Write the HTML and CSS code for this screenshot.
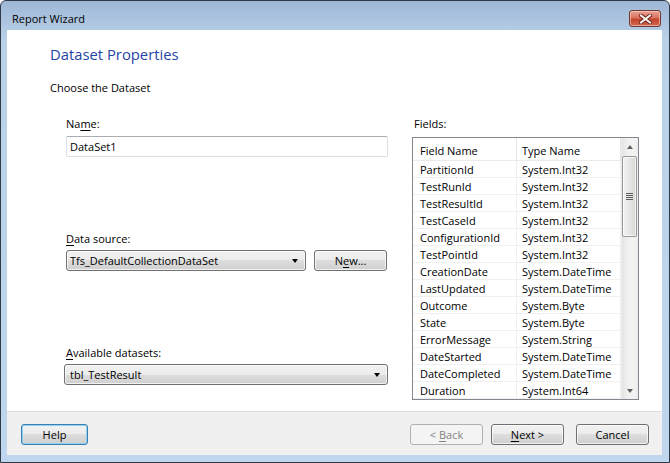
FILE: index.html
```html
<!DOCTYPE html>
<html>
<head>
<meta charset="utf-8">
<title>Report Wizard</title>
<link rel="stylesheet" href="styles.css">
</head>
<body>
<div class="window">
  <div class="titlebar">
    <span class="title">Report Wizard</span>
    <div class="close">
      <svg width="13" height="10" viewBox="0 0 13 10">
        <path d="M2 1.5 L11 8.5 M11 1.5 L2 8.5" stroke="#6a2418" stroke-width="4" stroke-linecap="square" fill="none"/>
        <path d="M2 1.5 L11 8.5 M11 1.5 L2 8.5" stroke="#f4f0ee" stroke-width="2" stroke-linecap="square" fill="none"/>
      </svg>
    </div>
  </div>
  <div class="client">
    <div class="page">
      <div class="heading">Dataset Properties</div>
      <div class="intro">Choose the Dataset</div>
      <div class="columns">
        <div class="left">
          <div class="label">Na<u>m</u>e:</div>
          <div class="textbox">DataSet1</div>
          <div class="label spaced"><u>D</u>ata source:</div>
          <div class="row">
            <div class="combo short">
              <span>Tfs_DefaultCollectionDataSet</span>
              <span class="arrow"></span>
            </div>
            <div class="btn newbtn"><span>N<u>e</u>w...</span></div>
          </div>
          <div class="label spaced"><u>A</u>vailable datasets:</div>
          <div class="combo wide">
            <span>tbl_TestResult</span>
            <span class="arrow"></span>
          </div>
        </div>
        <div class="right">
          <div class="label fields-label">Fields:</div>
          <div class="list">
            <div class="grid">
              <div class="hdr">Field Name</div><div class="hdr">Type Name</div>
              <div class="cell">PartitionId</div><div class="cell">System.Int32</div>
              <div class="cell">TestRunId</div><div class="cell">System.Int32</div>
              <div class="cell">TestResultId</div><div class="cell">System.Int32</div>
              <div class="cell">TestCaseId</div><div class="cell">System.Int32</div>
              <div class="cell">ConfigurationId</div><div class="cell">System.Int32</div>
              <div class="cell">TestPointId</div><div class="cell">System.Int32</div>
              <div class="cell">CreationDate</div><div class="cell">System.DateTime</div>
              <div class="cell">LastUpdated</div><div class="cell">System.DateTime</div>
              <div class="cell">Outcome</div><div class="cell">System.Byte</div>
              <div class="cell">State</div><div class="cell">System.Byte</div>
              <div class="cell">ErrorMessage</div><div class="cell">System.String</div>
              <div class="cell">DateStarted</div><div class="cell">System.DateTime</div>
              <div class="cell">DateCompleted</div><div class="cell">System.DateTime</div>
              <div class="cell">Duration</div><div class="cell">System.Int64</div>
            </div>
            <div class="scrollbar">
              <div class="sb-arrow up"></div>
              <div class="sb-track">
                <div class="thumb"><span class="grip"></span></div>
              </div>
              <div class="sb-arrow down"></div>
            </div>
          </div>
        </div>
      </div>
    </div>
    <div class="footer">
      <div class="btn help"><span>Help</span></div>
      <div class="spacer"></div>
      <div class="btn disabled"><span>&lt; <u>B</u>ack</span></div>
      <div class="btn next"><span><u>N</u>ext &gt;</span></div>
      <div class="btn cancel"><span>Cancel</span></div>
    </div>
  </div>
</div>
</body>
</html>
```

FILE: styles.css
```css
* { box-sizing: border-box; }
html, body { margin: 0; padding: 0; background: #ffffff; }
body {
  font-family: "Open Sans", "Liberation Sans", sans-serif;
  font-size: 11px;
  color: #000;
}
u { text-decoration: underline; text-underline-offset: 2px; }

.window {
  width: 670px;
  height: 463px;
  border: 1px solid #2f3a46;
  border-radius: 6px 6px 0 0;
  background: linear-gradient(#9db7d6 0px, #b3cae4 28px, #bad1ea 40px, #bfd6ee 100%);
  display: flex;
  flex-direction: column;
}

.titlebar {
  height: 29px;
  display: flex;
  align-items: flex-start;
  padding-left: 11px;
  padding-right: 8px;
}
.title {
  margin-top: 10px;
  font-size: 11px;
  line-height: 16px;
  color: #000;
  flex: 1;
}
.close {
  margin-top: 9px;
  width: 32px;
  height: 17px;
  border: 1px solid #6e3a32;
  border-radius: 3px;
  background: linear-gradient(#e8a294 0%, #d9725f 45%, #c4432c 55%, #d06a50 100%);
  box-shadow: inset 0 0 0 1px rgba(255,220,210,0.55);
  display: flex;
  align-items: center;
  justify-content: center;
}
.close svg { display: block; }

.client {
  margin: 0 7px 7px 6px;
  height: 425px;
  display: flex;
  flex-direction: column;
  background: #fff;
}

.page {
  height: 381px;
  padding: 14px 0 0 43px;
}
.heading {
  font-size: 14.8px;
  line-height: 20px;
  color: #1f45a6;
}
.intro {
  margin-top: 16px;
  line-height: 16px;
}

.columns {
  display: flex;
  margin-top: 20px;
  margin-left: 16px;
  gap: 24px;
}
.left {
  width: 322px;
  display: flex;
  flex-direction: column;
}
.right {
  width: 227px;
  display: flex;
  flex-direction: column;
}
.label {
  line-height: 16px;
  height: 16px;
}
.fields-label { padding-left: 2px; }
.spaced { margin-top: 74px; }

.textbox {
  margin-top: 4px;
  height: 21px;
  border: 1px solid #dbdfe6;
  border-top-color: #abadb3;
  border-radius: 2px;
  padding: 0 0 0 3px;
  line-height: 19px;
}

.row {
  display: flex;
  margin-top: 3px;
  gap: 8px;
}

.combo {
  height: 21px;
  border: 1px solid #707070;
  border-radius: 3px;
  background: linear-gradient(#f2f2f2 0%, #ebebeb 50%, #dddddd 50%, #cfcfcf 100%);
  box-shadow: inset 0 0 0 1px rgba(255,255,255,0.7);
  display: flex;
  align-items: center;
  padding: 0 7px 0 3px;
  line-height: 19px;
}
.combo span:first-child { flex: 1; }
.combo.short { width: 240px; }
.combo.wide { width: 324px; margin-left: -2px; margin-top: 3px; padding-left: 5px; }
.arrow {
  width: 0; height: 0;
  border-left: 3.5px solid transparent;
  border-right: 3.5px solid transparent;
  border-top: 4px solid #000;
}

.btn {
  height: 21px;
  border: 1px solid #707070;
  border-radius: 3px;
  background: linear-gradient(#f2f2f2 0%, #ebebeb 50%, #dddddd 50%, #cfcfcf 100%);
  box-shadow: inset 0 0 0 1px rgba(255,255,255,0.7);
  display: flex;
  align-items: center;
  justify-content: center;
  line-height: 19px;
}
.newbtn { width: 73px; }

.list {
  margin-top: 5px;
  height: 263px;
  width: 227px;
  border: 1px solid #828790;
  display: flex;
  overflow: hidden;
}
.grid {
  width: 208px;
  display: grid;
  grid-template-columns: 104px 104px;
  grid-template-rows: 23px repeat(14, 17px);
}
.hdr {
  padding: 3px 0 0 7px;
  line-height: 19px;
  border-right: 1px solid #e5e5e5;
  border-bottom: 1px solid #ebebeb;
}
.hdr:nth-child(2) { padding-left: 5px; }
.cell {
  padding: 1px 0 0 7px;
  line-height: 16px;
  border-right: 1px solid #f0f0f0;
  border-bottom: 1px solid #f0f0f0;
  white-space: nowrap;
  overflow: hidden;
}
.cell:nth-child(even) { padding-left: 5px; }

.scrollbar {
  width: 17px;
  display: flex;
  flex-direction: column;
  background: linear-gradient(90deg, #e3e3e3, #efefef 30%, #f3f3f3 70%, #ececec);
  border-left: 1px solid #ececec;
}
.sb-arrow {
  height: 17px;
  display: flex;
  align-items: center;
  justify-content: center;
}
.sb-arrow::after {
  content: "";
  width: 0; height: 0;
  border-left: 3.5px solid transparent;
  border-right: 3.5px solid transparent;
}
.sb-arrow.up::after { border-bottom: 4px solid #606060; }
.sb-arrow.down::after { border-top: 4px solid #606060; }
.sb-track {
  flex: 1;
  padding: 1px 1px 0 0;
}
.thumb {
  height: 81px;
  border: 1px solid #979797;
  border-radius: 2px;
  background: linear-gradient(90deg, #f1f1f1, #e6e6e6 50%, #d6d6d6);
  box-shadow: inset 0 0 0 1px rgba(255,255,255,0.7);
  display: flex;
  align-items: center;
  justify-content: center;
}
.grip {
  width: 7px;
  height: 7px;
  background: repeating-linear-gradient(#5c5c5c 0 1px, transparent 1px 2px);
}

.footer {
  height: 44px;
  border-top: 1px solid #dfdfdf;
  background: #f0f0f0;
  display: flex;
  align-items: flex-start;
  padding: 12px 13px 0 14px;
}
.spacer { flex: 1; }
.help {
  width: 67px;
  border-color: #3c7fb1;
  box-shadow: inset 0 0 0 1px #8bd3f5;
}
.disabled {
  width: 73px;
  border-color: #adb2b5;
  background: #f4f4f4;
  box-shadow: none;
  color: #838383;
}
.next { width: 73px; margin-left: 8px; }
.cancel { width: 73px; margin-left: 12px; }
```
